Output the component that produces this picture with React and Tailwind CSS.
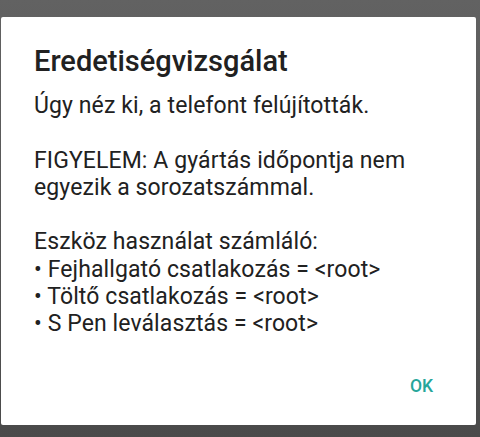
export default function App() {
  const lines = [
    "Úgy néz ki, a telefont felújították.",
    "",
    "FIGYELEM: A gyártás időpontja nem",
    "egyezik a sorozatszámmal.",
    "",
    "Eszköz használat számláló:",
    "• Fejhallgató csatlakozás = <root>",
    "• Töltő csatlakozás = <root>",
    "• S Pen leválasztás = <root>",
  ];
  return (
    <div className="w-[480px] h-[437px] overflow-hidden bg-linear-to-b from-[#626262] to-[#4a4a4a] pt-[17px] pl-[1px]" style={{ fontFamily: "Roboto, 'Noto Sans', sans-serif" }}>
      <div className="w-[475px] h-[408px] bg-white rounded-[2px] flex flex-col pl-[33px] pr-[20px]">
        <div className="pt-[28px] text-[29px] leading-[33px] font-medium text-[#212121]">Eredetiségvizsgálat</div>
        <div className="mt-[14px] text-[23px] leading-[27.3px] tracking-[0.1px] text-[#212121]">
          {lines.map((l, i) => (
            <div key={i} className="h-[27.3px] whitespace-pre">{l}</div>
          ))}
        </div>
        <div className="flex justify-end mt-auto mb-[30px] pr-[23px]">
          <span className="text-[17.5px] font-medium text-[#26a69a] leading-none">OK</span>
        </div>
      </div>
    </div>
  );
}
